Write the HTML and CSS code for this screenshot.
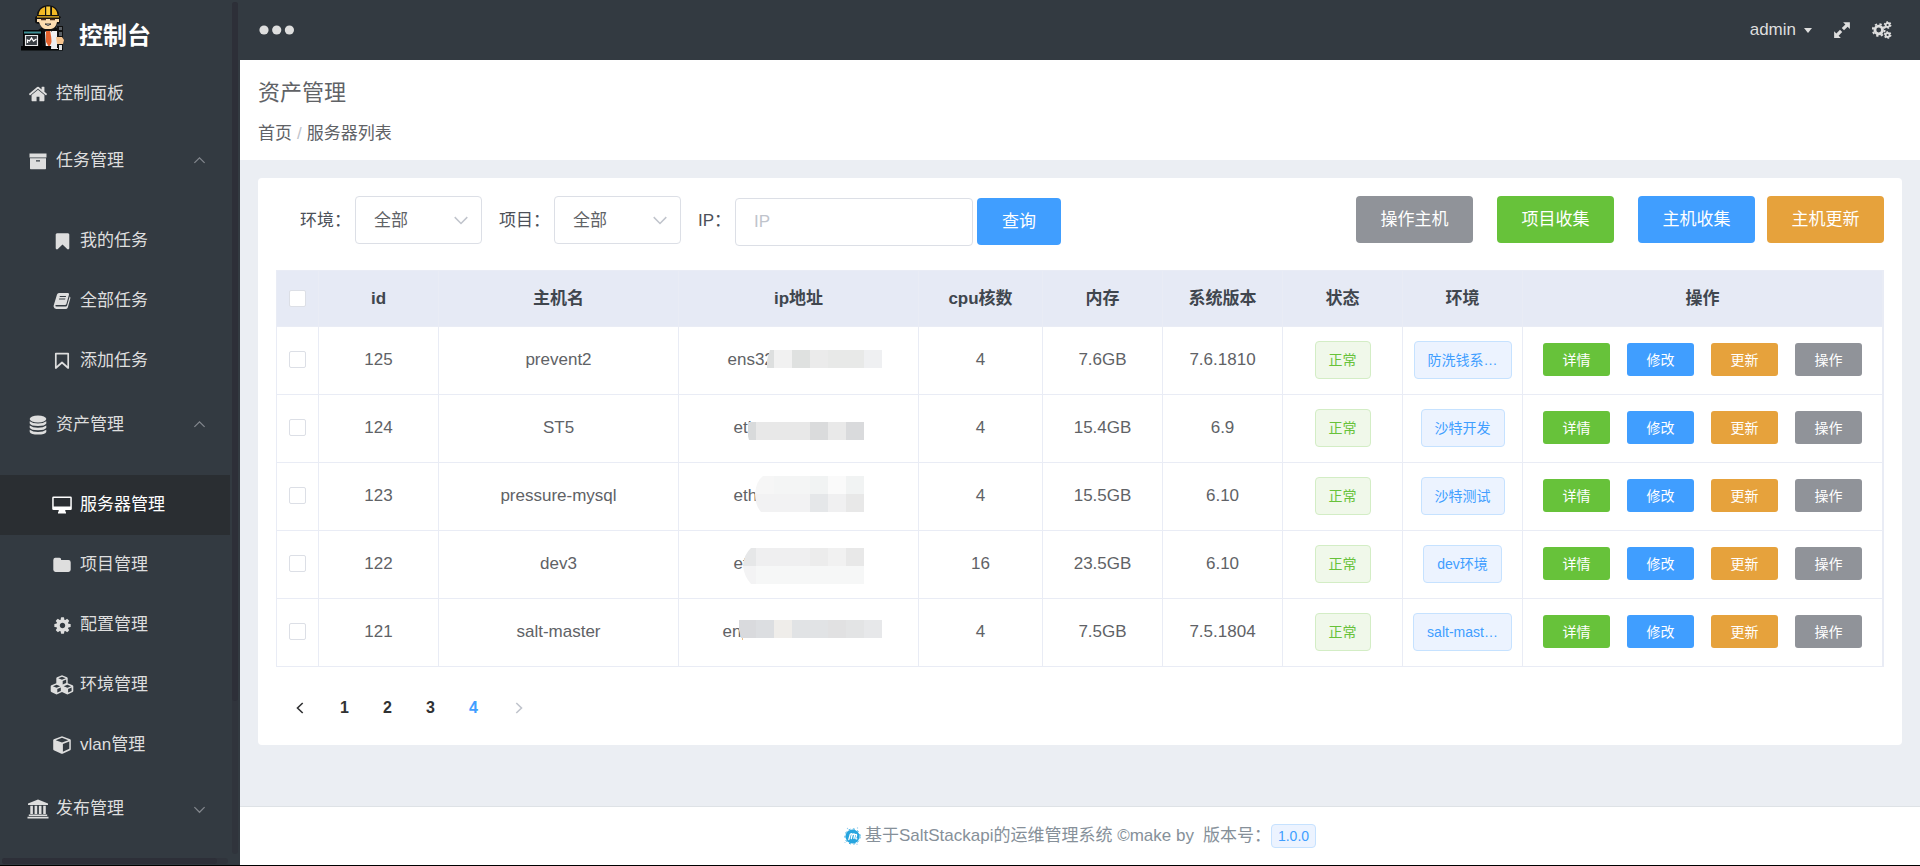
FILE: index.html
```html
<!DOCTYPE html>
<html lang="zh-CN">
<head>
<meta charset="utf-8">
<title>资产管理</title>
<link rel="stylesheet" href="styles.css">
</head>
<body>
<svg class="defs" aria-hidden="true">
  <symbol id="i-home" viewBox="0 0 1792 1792"><path d="M1472 992v480q0 26-19 45t-45 19h-384v-384h-256v384h-384q-26 0-45-19t-19-45v-480q0-1 .5-3t.5-3l575-474 575 474q1 2 1 6zm223-69l-62 74q-8 9-21 11h-3q-13 0-21-7l-692-577-692 577q-12 8-24 7-13-2-21-11l-62-74q-8-10-7-23.500t11-21.500l719-599q32-26 76-26t76 26l244 204v-195q0-14 9-23t23-9h192q14 0 23 9t9 23v408l219 182q10 8 11 21.500t-7 23.500z"/></symbol>
  <symbol id="i-cog" viewBox="0 0 1792 1792"><path d="M1152 896q0-106-75-181t-181-75-181 75-75 181 75 181 181 75 181-75 75-181zm512-109v222q0 12-8 23t-20 13l-185 28q-19 54-39 91 35 50 107 138 10 12 10 25t-9 23q-27 37-99 108t-94 71q-12 0-26-9l-138-108q-44 23-91 38-16 136-29 186-7 28-36 28h-222q-14 0-24.500-8.500t-11.500-21.500l-28-184q-49-16-90-37l-141 107q-10 9-25 9-14 0-25-11-126-114-165-168-7-10-7-23 0-12 8-23 15-21 51-66.500t54-70.500q-27-50-41-99l-183-27q-13-2-21-12.500t-8-23.500v-222q0-12 8-23t19-13l186-28q14-46 39-92-40-57-107-138-10-12-10-24 0-10 9-23 26-36 98.500-107.500t94.500-71.500q13 0 26 10l138 107q44-23 91-38 16-136 29-186 7-28 36-28h222q14 0 24.500 8.500t11.500 21.500l28 184q49 16 90 37l142-107q9-9 24-9 13 0 25 10 129 119 165 170 7 8 7 22 0 12-8 23-15 21-51 66.500t-54 70.500q26 50 41 98l183 28q13 2 21 12.500t8 23.500z"/></symbol>
  <symbol id="i-cogs" viewBox="0 0 20 18"><g fill="none" stroke="currentColor"><circle cx="6.700" cy="9" r="3.800" stroke-width="2.800"/><circle cx="6.700" cy="9" r="5.900" stroke-width="1.900" stroke-dasharray="2.320 2.320"/><circle cx="15.600" cy="4" r="2" stroke-width="1.800"/><circle cx="15.600" cy="4" r="3.200" stroke-width="1.300" stroke-dasharray="1.680 1.680"/><circle cx="15.600" cy="14" r="2" stroke-width="1.800"/><circle cx="15.600" cy="14" r="3.200" stroke-width="1.300" stroke-dasharray="1.680 1.680"/></g></symbol>
  <symbol id="i-expand" viewBox="0 0 16 16"><path d="M9 1h6v6l-2-2-3.200 3.200-2-2L11 3zM7 15H1V9l2 2 3.200-3.200 2 2L5 13z"/></symbol>
  <symbol id="i-archive" viewBox="0 0 18 18"><path d="M.5 1.500h17v4H.5z"/><path fill-rule="evenodd" d="M1 6.300h16v10.200q0 .7-.7.7H1.700q-.7 0-.7-.7zm6 1.900v1.300h4V8.200z"/></symbol>
  <symbol id="i-bookmark" viewBox="0 0 1792 1792"><path d="M1420 128q23 0 44 9 33 13 52.500 41t19.500 62v1289q0 34-19.500 62t-52.500 41q-19 8-44 8-48 0-83-32l-441-424-441 424q-36 33-83 33-23 0-44-9-33-13-52.500-41t-19.500-62v-1289q0-34 19.500-62t52.500-41q21-9 44-9h1048z"/></symbol>
  <symbol id="i-bookmark-o" viewBox="0 0 18 18"><path d="M2.800 1.700h12.400v14.300L9 10.500 2.800 16z" fill="none" stroke="currentColor" stroke-width="1.700" stroke-linejoin="round"/></symbol>
  <symbol id="i-book" viewBox="0 0 18 18"><path fill-rule="evenodd" d="M6 1h9q1.300.2 1 1.600l-2.600 9.400q-.3 1-1.500 1H3.400q-1 0-1.200.8.100.8 1.200.8h9.500q.8 0 1.100-.8l2.700-9.300q1 .7.600 2L14.800 15.400q-.5 1.600-2.300 1.600H3.200Q1 16.800.6 14.500q0-1 .3-1.800L4 2.600Q4.500 1.100 6 1zm.9 3.100-.3 1h6.200l.3-1zm-.7 2.300-.3 1h6.200l.3-1z"/></symbol>
  <symbol id="i-database" viewBox="0 0 18 20"><ellipse cx="9" cy="4" rx="8.300" ry="3.500"/><path d="M.7 6.300q3 2.300 8.300 2.300t8.300-2.300v2.200Q16 11 9 11T.7 8.500zM.7 10.500q3 2.300 8.300 2.300t8.300-2.300v2.200q-1.300 2.500-8.300 2.500T.7 12.700zM.7 14.700Q3.700 17 9 17t8.300-2.300v2.200q-1.300 2.600-8.300 2.600T.7 16.900z"/></symbol>
  <symbol id="i-desktop" viewBox="0 0 20 18"><path fill-rule="evenodd" d="M1.500.5h17q1.300 0 1.300 1.300v11q0 1.300-1.300 1.300h-5.300q0 1.500.8 2.300v1H6v-1q.8-.8.800-2.300H1.500Q.2 14.100.2 12.800v-11Q.2.500 1.500.500zm.2 1.600v8.400h16.600V2.100z"/></symbol>
  <symbol id="i-folder" viewBox="0 0 18 18"><path d="M2.300 1.800h4.200Q8.200 1.900 8.200 4H15.500q2.100.1 2.200 2.200v7.500q-.1 2-2.200 2.200H2.500Q.4 15.700.3 13.700V3.900Q.5 1.900 2.300 1.800z"/></symbol>
  <symbol id="i-cube" viewBox="0 0 18 18"><path fill-rule="evenodd" d="M9 .2l8.200 3q.6.300.6 1v9q0 .6-.6 1L9.600 17.700q-.6.300-1.200 0L.8 14.200q-.6-.4-.6-1v-9q0-.7.600-1zm0 1.600L2.700 4.200 9 6.500l6.300-2.300zM9.900 8v7.700l6.400-3V5.600z"/></symbol>
  <symbol id="i-cubes" viewBox="0 0 24 20"><path fill-rule="evenodd" d="M12 .3l5 2q.7.300.7 1v5l4.900 2q.7.300.7 1v4.700q0 .7-.6 1l-4.700 2.300q-.6.300-1.200 0L12 17l-4.800 2.300q-.6.300-1.200 0L1.300 17q-.6-.3-.6-1v-4.700q0-.7.700-1l4.900-2v-5q0-.7.700-1zm0 1.400L8.300 3.200 12 4.800l3.700-1.600zM12.700 6v3.500l3.500-1.500V4.500zM6.600 9.700l-3.700 1.500 3.700 1.600 3.700-1.600zm.7 4.300v3.600l3.500-1.700v-3.400zM17.400 9.700l-3.700 1.500 3.700 1.600 3.700-1.600zm.7 4.300v3.600l3.500-1.700v-3.400z"/></symbol>
  <symbol id="i-bank" viewBox="0 0 22 20"><path d="M11 .5l10 4v1.400H1V4.500zM1.800 15.600h18.400v1.300H1.800zM.5 17.700h21v1.700H.5zM3.300 6.800h2.600v8.200H3.300zM7.600 6.800h2.600v8.200H7.600zM11.900 6.800h2.600v8.200h-2.600zM16.200 6.800h2.600v8.200h-2.600z"/></symbol>
  <symbol id="i-down" viewBox="0 0 14 14"><path d="M1.500 4.500 7 10l5.500-5.500" fill="none" stroke="currentColor" stroke-width="1.300"/></symbol>
  <symbol id="i-up" viewBox="0 0 14 14"><path d="M1.500 8.500 7 3l5.500 5.500" fill="none" stroke="currentColor" stroke-width="1.300"/></symbol>
  <symbol id="i-left" viewBox="0 0 14 14"><path d="M9.700 2 4.500 7l5.200 5" fill="none" stroke="currentColor" stroke-width="1.600"/></symbol>
  <symbol id="i-right" viewBox="0 0 14 14"><path d="M4.300 2l5.200 5-5.200 5" fill="none" stroke="currentColor" stroke-width="1.600"/></symbol>
</svg>

<div class="app">
  <aside class="sidebar">
    <div class="brand">
      <svg class="brand-logo" viewBox="0 0 44 46" aria-hidden="true">
        <path d="M20 23q-4 2-4 8v14h26V30q-1-6-6-7z" fill="#0b0d0f"/>
        <path d="M28 24l-4 3 1 18h8l-2-18z" fill="#f3f3f3"/>
        <path d="M31 26h6l-1 19h-8z" fill="#f0f0f2"/>
        <path d="M25 25h4l2 12-3 5-3-5z" fill="#e4632e"/>
        <path d="M14 13h25v5q-1 1-3 1-1 5-4 7h-7q-5-2-6-7-4 0-5-2z" fill="#111"/>
        <path d="M16 14h22v3h-2q-1 6-6 7h-6q-4-1-6-7h-2z" fill="#fbdcb0"/>
        <path d="M20 14.500h5M29 14.500h5" stroke="#4a2b1c" stroke-width="1.500"/>
        <path d="M24 19q3 3 6 0z" fill="#fff" stroke="#111" stroke-width=".8"/>
        <path d="M14 13q0-2 2-2Q16 1 27 0q11 1 11 11 2 0 2 2z" fill="#111"/>
        <path d="M17.500 10q1-7 6.500-8v8zM31 2q5 2 5.500 8H31zM16 11.200h22v1.200H16z" fill="#f2b824"/>
        <path d="M25.200 1.500h4V10h-4z" fill="#f8ca3a"/>
        <path d="M2 25h19v19H2zM0 41h42v4.500H0z" fill="#050607"/>
        <path d="M3 26.500h17v2H3z" fill="#3e8f95"/>
        <path d="M4.500 30.500h12v10h-12z" fill="#3a3f44" stroke="#e9eaec" stroke-width="1.200"/>
        <path d="M6.500 38v-3l2 1 2-3 2 3 3-2" fill="none" stroke="#fff" stroke-width="1.300"/>
        <path d="M31 30h6v14h-7z" fill="#ededf0"/>
        <path d="M36 21h6v22h-6z" fill="#111"/>
        <path d="M38 22h3v3h-3zM38 27h3v4h-3z" fill="#5b6065"/>
        <path d="M35 32h6l2 3-1 4h-6z" fill="#f7c48e"/>
        <path d="M38 40h3v5h-3z" fill="#dfe1e3"/>
      </svg>
      <span>控制台</span>
    </div>
    <nav class="menu">
      <a class="item" href="#"><span class="icon"><svg width="20" height="20"><use href="#i-home"/></svg></span>控制面板</a>
      <button class="item" type="button"><span class="icon"><svg width="18" height="18"><use href="#i-archive"/></svg></span>任务管理<svg class="fold" width="13" height="13"><use href="#i-up"/></svg></button>
      <div class="submenu">
        <a class="item" href="#"><span class="icon"><svg width="19" height="19"><use href="#i-bookmark"/></svg></span>我的任务</a>
        <a class="item" href="#"><span class="icon"><svg width="18" height="18"><use href="#i-book"/></svg></span>全部任务</a>
        <a class="item" href="#"><span class="icon"><svg width="18" height="18"><use href="#i-bookmark-o"/></svg></span>添加任务</a>
      </div>
      <button class="item" type="button"><span class="icon"><svg width="18" height="20"><use href="#i-database"/></svg></span>资产管理<svg class="fold" width="13" height="13"><use href="#i-up"/></svg></button>
      <div class="submenu">
        <a class="item active" href="#"><span class="icon"><svg width="20" height="18"><use href="#i-desktop"/></svg></span>服务器管理</a>
        <a class="item" href="#"><span class="icon"><svg width="18" height="18"><use href="#i-folder"/></svg></span>项目管理</a>
        <a class="item" href="#"><span class="icon"><svg width="19" height="19"><use href="#i-cog"/></svg></span>配置管理</a>
        <a class="item" href="#"><span class="icon"><svg width="24" height="20"><use href="#i-cubes"/></svg></span>环境管理</a>
        <a class="item" href="#"><span class="icon"><svg width="18" height="18"><use href="#i-cube"/></svg></span>vlan管理</a>
      </div>
      <button class="item" type="button"><span class="icon"><svg width="22" height="20"><use href="#i-bank"/></svg></span>发布管理<svg class="fold" width="13" height="13"><use href="#i-down"/></svg></button>
    </nav>
    <div class="bar bar-y"><div class="thumb"></div></div>
    <div class="bar bar-x"><div class="thumb"></div></div>
  </aside>

  <div class="main">
    <header class="topbar">
      <button class="plain" type="button" aria-label="菜单"><svg width="36" height="10" viewBox="0 0 36 10"><circle cx="5" cy="5" r="4.600"/><circle cx="17.700" cy="5" r="4.600"/><circle cx="30.400" cy="5" r="4.600"/></svg></button>
      <div class="tools">
        <button class="plain user" type="button">admin<span class="caret"></span></button>
        <button class="plain" type="button" aria-label="全屏"><svg width="18" height="18"><use href="#i-expand"/></svg></button>
        <button class="plain" type="button" aria-label="设置"><svg width="20" height="18"><use href="#i-cogs"/></svg></button>
      </div>
    </header>

    <div class="heading">
      <h1>资产管理</h1>
      <nav class="crumbs"><a href="#">首页</a><span class="slash">/</span><span>服务器列表</span></nav>
    </div>

    <main class="content">
      <section class="card">
        <div class="toolbar">
          <form class="filters">
            <div class="field"><label for="env">环境：</label>
              <span class="select"><select id="env"><option>全部</option></select><svg width="16" height="16"><use href="#i-down"/></svg></span></div>
            <div class="field"><label for="project">项目：</label>
              <span class="select"><select id="project"><option>全部</option></select><svg width="16" height="16"><use href="#i-down"/></svg></span></div>
            <div class="field search"><label for="ip">IP：</label>
              <input class="text" id="ip" type="text" placeholder="IP"><button class="btn primary" type="button">查询</button></div>
          </form>
          <div class="actions">
            <button class="btn info" type="button">操作主机</button>
            <button class="btn success" type="button">项目收集</button>
            <div class="pair">
              <button class="btn primary" type="button">主机收集</button>
              <button class="btn warning" type="button">主机更新</button>
            </div>
          </div>
        </div>

        <table class="hosts">
          <colgroup><col class="w-check"><col class="w-s"><col class="w-m"><col class="w-m"><col class="w-cpu"><col class="w-s"><col class="w-s"><col class="w-s"><col class="w-s"><col></colgroup>
          <thead>
            <tr><th><input type="checkbox" aria-label="全选"></th><th>id</th><th>主机名</th><th>ip地址</th><th>cpu核数</th><th>内存</th><th>系统版本</th><th>状态</th><th>环境</th><th>操作</th></tr>
          </thead>
          <tbody>
            <tr>
              <td><input type="checkbox" aria-label="125"></td><td>125</td><td>prevent2</td>
              <td class="ip"><span class="ip-l">ens32</span><svg class="mask" viewBox="1 0 240 68"><path fill="#dddfdf" d="M92 23h4v18h-7v-8z"/><path fill="#f1f1f1" d="M96 23h18v18H96z"/><path fill="#dfe1e0" d="M114 23h18v18h-18z"/><path fill="#ebebeb" d="M132 23h18v18h-18z"/><path fill="#e8e9e8" d="M150 23h36v18h-36z"/><path fill="#eff0f2" d="M186 23h18v18h-18z"/></svg></td>
              <td>4</td><td>7.6GB</td><td>7.6.1810</td><td><span class="tag ok">正常</span></td><td><span class="tag">防洗钱系…</span></td>
              <td><div class="ops"><button class="btn small success" type="button">详情</button><button class="btn small primary" type="button">修改</button><button class="btn small warning" type="button">更新</button><button class="btn small info" type="button">操作</button></div></td>
            </tr>
            <tr>
              <td><input type="checkbox" aria-label="124"></td><td>124</td><td>ST5</td>
              <td class="ip"><span class="ip-m">eth</span><svg class="mask" viewBox="1 0 240 68"><path fill="#d8dadb" d="M70 27h8v18h-7l-1-4z"/><path fill="#e8e8e8" d="M78 27h54v18H78z"/><path fill="#dadbdc" d="M132 27h18v18h-18z"/><path fill="#e9e9e9" d="M150 27h18v18h-18z"/><path fill="#d9dadc" d="M168 27h18v18h-18z"/></svg></td>
              <td>4</td><td>15.4GB</td><td>6.9</td><td><span class="tag ok">正常</span></td><td><span class="tag">沙特开发</span></td>
              <td><div class="ops"><button class="btn small success" type="button">详情</button><button class="btn small primary" type="button">修改</button><button class="btn small warning" type="button">更新</button><button class="btn small info" type="button">操作</button></div></td>
            </tr>
            <tr>
              <td><input type="checkbox" aria-label="123"></td><td>123</td><td>pressure-mysql</td>
              <td class="ip"><span class="ip-m">eth</span><svg class="mask" viewBox="1 0 240 68"><path fill="#f6f6f6" d="M85 13h11v18H77q1-13 8-18z"/><path fill="#f2f2f3" d="M77 31h55v18H83q-6-7-6-18z"/><path fill="#f4f5f5" d="M96 13h36v18H96z"/><path fill="#f1f3f3" d="M132 13h18v18h-18z"/><path fill="#fafafa" d="M150 13h18v18h-18z"/><path fill="#f1f3f3" d="M168 13h18v18h-18z"/><path fill="#e5e7e9" d="M132 31h18v18h-18z"/><path fill="#f0f0f1" d="M150 31h18v18h-18z"/><path fill="#e8e8e8" d="M168 31h18v18h-18z"/></svg></td>
              <td>4</td><td>15.5GB</td><td>6.10</td><td><span class="tag ok">正常</span></td><td><span class="tag">沙特测试</span></td>
              <td><div class="ops"><button class="btn small success" type="button">详情</button><button class="btn small primary" type="button">修改</button><button class="btn small warning" type="button">更新</button><button class="btn small info" type="button">操作</button></div></td>
            </tr>
            <tr>
              <td><input type="checkbox" aria-label="122"></td><td>122</td><td>dev3</td>
              <td class="ip"><span class="ip-m">eth</span><svg class="mask" viewBox="1 0 240 68"><path fill="#e6e7e8" d="M73 17h5v18H65q1-12 8-18z"/><path fill="#f3f3f4" d="M65 35h13v18h-5q-7-8-8-18z"/><path fill="#efeff0" d="M78 17h54v18H78z"/><path fill="#ececec" d="M132 17h18v18h-18z"/><path fill="#f1f1f1" d="M150 17h18v18h-18z"/><path fill="#e8e8e8" d="M168 17h18v18h-18z"/><path fill="#f6f7f7" d="M78 35h108v18H78z"/></svg></td>
              <td>16</td><td>23.5GB</td><td>6.10</td><td><span class="tag ok">正常</span></td><td><span class="tag">dev环境</span></td>
              <td><div class="ops"><button class="btn small success" type="button">详情</button><button class="btn small primary" type="button">修改</button><button class="btn small warning" type="button">更新</button><button class="btn small info" type="button">操作</button></div></td>
            </tr>
            <tr>
              <td><input type="checkbox" aria-label="121"></td><td>121</td><td>salt-master</td>
              <td class="ip"><span class="ip-xl">enp</span><svg class="mask" viewBox="1 0 240 68"><path fill="#fff" d="M65 39h14v10H65z"/><path fill="#d9dadd" d="M61 21h17v18H63l-2-8z"/><path fill="#dcdee1" d="M78 21h18v18H78z"/><path fill="#efedea" d="M96 21h18v18H96z"/><path fill="#e1e3e5" d="M114 21h36v18h-36z"/><path fill="#e1e1e2" d="M150 21h18v18h-18z"/><path fill="#e3e4e5" d="M168 21h18v18h-18z"/><path fill="#e7e8ea" d="M186 21h18v18h-18z"/></svg></td>
              <td>4</td><td>7.5GB</td><td>7.5.1804</td><td><span class="tag ok">正常</span></td><td><span class="tag">salt-mast…</span></td>
              <td><div class="ops"><button class="btn small success" type="button">详情</button><button class="btn small primary" type="button">修改</button><button class="btn small warning" type="button">更新</button><button class="btn small info" type="button">操作</button></div></td>
            </tr>
          </tbody>
        </table>

        <nav class="pager" aria-label="分页">
          <button class="arrow" type="button" aria-label="上一页"><svg width="14" height="14"><use href="#i-left"/></svg></button>
          <button type="button">1</button><button type="button">2</button><button type="button">3</button><button class="current" type="button">4</button>
          <button class="arrow" type="button" aria-label="下一页" disabled><svg width="14" height="14"><use href="#i-right"/></svg></button>
        </nav>
      </section>
    </main>

    <footer class="footer">
      <svg width="17" height="18" viewBox="0 0 17 18" aria-hidden="true"><circle cx="8.500" cy="9.500" r="7" fill="#27a5df"/><circle cx="8.500" cy="9.500" r="7.600" fill="none" stroke="#27a5df" stroke-width="1" stroke-dasharray="2 2.500"/><g fill="#9ccdea"><circle cx="3.500" cy="1.500" r=".7"/><circle cx="13.500" cy="1" r=".7"/><circle cx="1" cy="15.500" r=".6"/><circle cx="13" cy="17.200" r=".7"/></g><path d="M4.800 12.600 6.300 7.300M6.300 7.300q1.600-1.300 1.900.2L7.300 11.500M8.100 7.900q2.200-1.800 2.500 0L9.900 11.300M10.500 8q2.100-1.400 2.100.2l-.8 2.900q0 1 1 .7" fill="none" stroke="#fff" stroke-width="1.300" stroke-linecap="round" stroke-linejoin="round"/></svg>
      <span>基于SaltStackapi的运维管理系统 ©make by</span>
      <span class="version">版本号：<span class="tag mini">1.0.0</span></span>
    </footer>
  </div>
</div>
</body>
</html>
```
FILE: styles.css
```css
*, *::before, *::after { box-sizing: border-box; }

body {
  margin: 0;
  font: 17px/24px "Liberation Sans", "Noto Sans CJK SC", sans-serif;
  color: #606266;
  background: #ebeef3;
}

button, input, select { font: inherit; color: inherit; }
a { color: inherit; text-decoration: none; }
svg { fill: currentColor; flex: none; }
.defs { position: absolute; width: 0; height: 0; }

.app {
  display: flex;
  min-height: 100vh;
  border-bottom: 1px solid #000;
}

/* Sidebar */
.sidebar {
  position: relative;
  flex: none;
  width: 240px;
  padding-right: 10px;
  background: #333a41;
  color: #dedede;
}
.brand {
  display: flex;
  align-items: center;
  gap: 14px;
  height: 61px;
  padding: 10px 0 0 21px;
  font-size: 24px;
  font-weight: 700;
  color: #fff;
}
.brand-logo { width: 44px; height: 46px; align-self: flex-end; margin-bottom: 10px; }
.item {
  display: flex;
  align-items: center;
  gap: 3px;
  width: 100%;
  height: 68px;
  padding: 0 24px 0 23px;
  border: 0;
  background: none;
  cursor: pointer;
}
.menu > a.item { height: 66px; }
.icon { display: flex; justify-content: center; width: 30px; }
.fold { margin-left: auto; color: #83878d; }
.submenu { padding-top: 16px; }
.submenu .item { height: 60px; padding-left: 47px; }
.item.active { background: #2a2e32; color: #fff; }

.bar { position: absolute; border-radius: 3px; background: #30343c; }
.bar-y { top: 2px; right: 2px; bottom: 11px; width: 6px; }
.bar-x { left: 2px; right: 12px; bottom: 1px; height: 6px; }
.thumb { border-radius: 3px; background: #2d2f38; }
.bar-y .thumb { height: 82%; }
.bar-x .thumb { width: 95%; height: 100%; }

/* Main column */
.main { display: flex; flex: 1; flex-direction: column; min-width: 0; }

.topbar {
  display: flex;
  align-items: center;
  justify-content: space-between;
  height: 60px;
  padding: 0 28px 0 19px;
  background: #333a41;
  color: #dedede;
}
.plain { display: flex; align-items: center; padding: 0; border: 0; background: none; cursor: pointer; }
.tools { display: flex; align-items: center; gap: 21px; }
.user { gap: 8px; }
.caret { border: 4px solid transparent; border-top: 5px solid currentColor; border-bottom: 0; }

.heading { padding: 17px 18px 10px; background: #fff; }
.heading h1 { margin: 0 0 9px; font-size: 22px; line-height: 32px; font-weight: 400; }
.crumbs { display: flex; gap: 5px; line-height: 32px; }
.slash { color: #c0c4cc; }

.content { flex: 1; padding: 18px; }
.card { padding: 18px 18px 20px; border-radius: 4px; background: #fff; }

.toolbar { display: flex; justify-content: space-between; align-items: flex-start; margin-bottom: 24px; }
.filters { display: flex; gap: 17px; padding-left: 24px; color: #4c5058; }
.field { display: flex; align-items: flex-start; gap: 4px; }
.field label { line-height: 50px; }
.select { position: relative; display: block; color: #606266; }
.select select {
  width: 127px;
  height: 48px;
  padding: 2px 18px 0;
  appearance: none;
  border: 1px solid #dcdfe6;
  border-radius: 4px;
  background: #fff;
}
.select svg { position: absolute; top: 16px; right: 13px; color: #c0c4cc; pointer-events: none; }
.search .text, .search .btn { margin-top: 2px; }
.text {
  width: 238px;
  height: 48px;
  padding: 0 18px;
  border: 1px solid #dcdfe6;
  border-radius: 4px;
  background: #fff;
}
.text::placeholder { color: #c0c4cc; opacity: 1; }

.actions { display: flex; gap: 24px; }
.pair { display: flex; gap: 12px; }
.btn {
  height: 47px;
  padding: 0 25px;
  border: 0;
  border-radius: 4px;
  color: #fff;
  white-space: nowrap;
  cursor: pointer;
}
.actions .btn { width: 117px; padding: 0; }
.primary { background: #409eff; }
.success { background: #67c23a; }
.warning { background: #e6a23c; }
.info { background: #909399; }
.small { width: 67px; height: 33px; padding: 0; border-radius: 3px; font-size: 14px; }

/* Host table */
.hosts {
  width: 100%;
  table-layout: fixed;
  border: 1px solid #e9ecf5;
  border-bottom: 0;
  border-spacing: 0;
  text-align: center;
}
.w-check { width: 42px; }
.w-s { width: 120px; }
.w-m { width: 240px; }
.w-cpu { width: 124px; }
.hosts th, .hosts td {
  height: 68px;
  padding: 0 0 2px;
  border-right: 1px solid #e9ecf5;
  border-bottom: 1px solid #e9ecf5;
}
.hosts th { height: 56px; padding: 0; background: #e6eaf5; color: #40464e; font-weight: 700; }
.hosts input {
  display: block;
  width: 17px;
  height: 17px;
  margin: 0 auto;
  appearance: none;
  border: 1px solid #dcdfe6;
  border-radius: 2px;
  background: #fff;
}
.ip { position: relative; }
.ip span { display: inline-block; text-align: left; }
.ip-m { width: 130px; }
.ip-l { width: 142px; }
.ip-xl { width: 152px; }
.mask { position: absolute; inset: 0; width: 240px; height: 68px; margin: auto; }

.tag {
  display: inline-block;
  padding: 0 13px;
  border: 1px solid #c6e2ff;
  border-radius: 4px;
  background: #ecf3ff;
  color: #409eff;
  font-size: 14px;
  line-height: 36px;
  white-space: nowrap;
  vertical-align: middle;
}
.tag.ok { border-color: #d3edc5; background: #f0f8ea; color: #67c23a; }
.tag.mini { padding: 0 6px; line-height: 22px; }
.ops { display: flex; justify-content: center; gap: 17px; }

.pager { display: flex; align-items: center; height: 34px; margin-top: 24px; color: #303133; }
.pager button {
  display: flex;
  align-items: center;
  justify-content: center;
  width: 43px;
  height: 34px;
  padding: 0;
  border: 0;
  background: none;
  font-size: 16px;
  font-weight: 700;
}
.pager .arrow { width: 47px; }
.pager .current { color: #409eff; }
.pager :disabled { color: #c0c4cc; }

.footer {
  display: flex;
  align-items: center;
  justify-content: center;
  gap: 4px;
  height: 59px;
  border-top: 1px solid #dee2e6;
  background: #fff;
  color: #869099;
}
.version { display: flex; align-items: center; padding-left: 5px; }
```
